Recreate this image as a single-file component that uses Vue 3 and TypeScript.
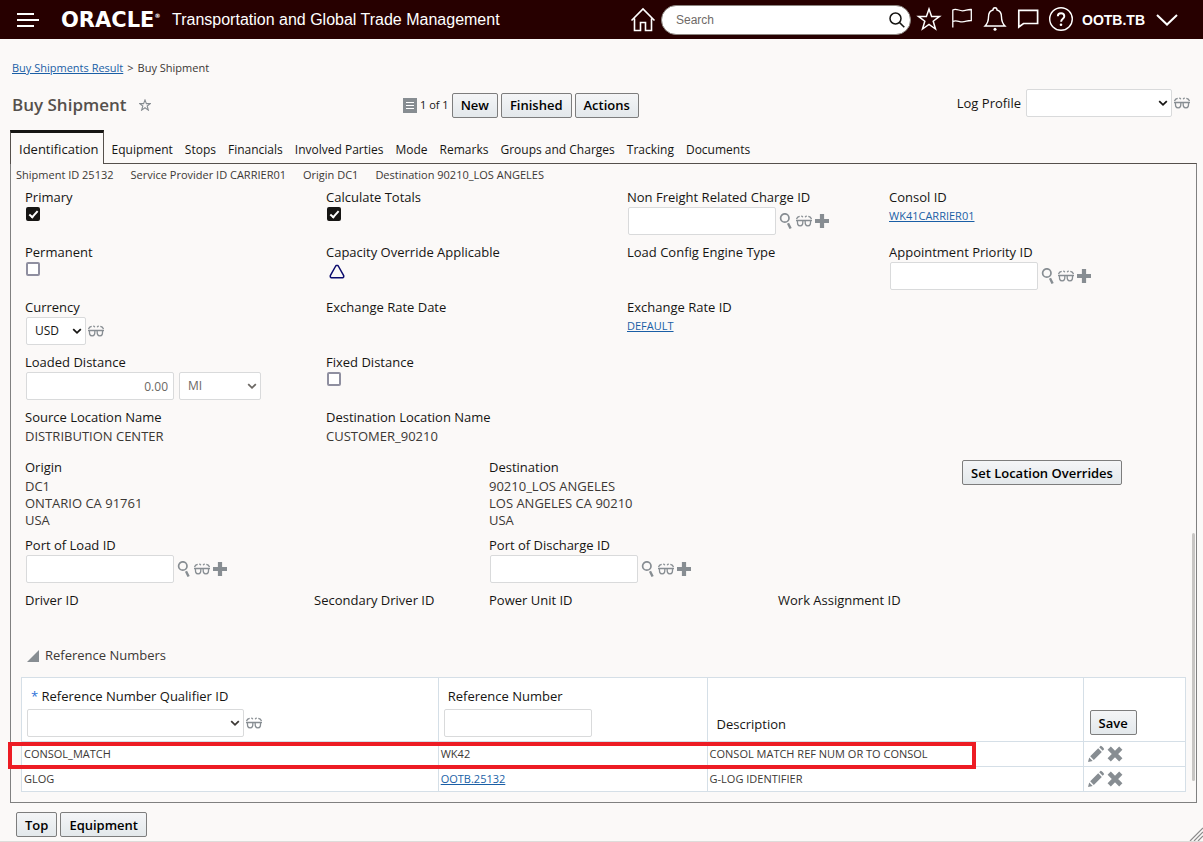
<script setup lang="ts">
import { ref } from 'vue'

const search = ref('')
const primary = ref(true)
const calculateTotals = ref(true)
const permanent = ref(false)
const fixedDistance = ref(false)
const currency = ref('USD')
const distance = ref('0.00')
const distanceUnit = ref('MI')

const headerActions = [
  { icon: 'star', label: 'Favorites' },
  { icon: 'flag', label: 'Watchlist' },
  { icon: 'bell', label: 'Notifications' },
  { icon: 'chat', label: 'Conversations' },
  { icon: 'help', label: 'Help' },
]

const tabs = [
  'Equipment', 'Stops', 'Financials', 'Involved Parties', 'Mode',
  'Remarks', 'Groups and Charges', 'Tracking', 'Documents',
]

const summary = [
  'Shipment ID 25132',
  'Service Provider ID CARRIER01',
  'Origin DC1',
  'Destination 90210_LOS ANGELES',
]

const lookups = [
  { icon: 'find', label: 'Find' },
  { icon: 'glasses', label: 'View' },
  { icon: 'plus', label: 'New' },
]

interface Reference {
  qualifier: string
  number: string
  description: string
  linked: boolean
  marked: boolean
}

const references: Reference[] = [
  { qualifier: 'CONSOL_MATCH', number: 'WK42', description: 'CONSOL MATCH REF NUM OR TO CONSOL', linked: false, marked: true },
  { qualifier: 'GLOG', number: 'OOTB.25132', description: 'G-LOG IDENTIFIER', linked: true, marked: false },
]
</script>

<template>
  <svg class="sprite" aria-hidden="true">
    <symbol id="home" viewBox="0 0 26 26"><path d="M1.500 13.500 13 2l11.500 11.500M4.500 11.500V23.500h6V15.500h5v8h6V11.500" fill="none" stroke="currentColor" stroke-width="1.600" /></symbol>
    <symbol id="star" viewBox="0 0 26 26"><path d="M13 3l2.600 7.400h7.900l-6.300 4.800 2.300 7.800L13 18.400 6.500 23l2.300-7.800-6.300-4.800h7.900z" fill="none" stroke="currentColor" stroke-width="1.500" /></symbol>
    <symbol id="flag" viewBox="0 0 26 26"><path d="M3.800 22V4.500c3.500-2 6 .8 9.500.8s5-1.500 9-1.300v11c-4-.2-5.500 1.400-9 1.400s-6-2.200-9.500-.4" transform="translate(0 -.5)" fill="none" stroke="currentColor" stroke-width="1.300" /></symbol>
    <symbol id="bell" viewBox="0 0 26 26"><path d="M3 20c2.500-2.500 3.500-5 3.500-9 0-4 1.500-6.300 4.500-7 0-3 4-3 4 0 3 .7 4.500 3 4.500 7 0 4 1 6.500 3.500 9z" fill="none" stroke="currentColor" stroke-width="1.400" /><circle cx="13" cy="23.200" r="1.500" fill="currentColor" /></symbol>
    <symbol id="chat" viewBox="0 0 26 26"><path d="M3.800 21V4.300h18.800v13.200H8.500z" fill="none" stroke="currentColor" stroke-width="1.700" /></symbol>
    <symbol id="help" viewBox="0 0 26 26"><circle cx="13" cy="13" r="11.300" fill="none" stroke="currentColor" stroke-width="1.400" /><path d="M9.800 10.200c0-4 6.500-4 6.500 0 0 2.600-3.200 2.400-3.200 5.500" fill="none" stroke="currentColor" stroke-width="1.900" /><circle cx="13" cy="18.800" r="1.300" fill="currentColor" /></symbol>
    <symbol id="search" viewBox="0 0 18 18"><circle cx="7.500" cy="7.500" r="5.500" fill="none" stroke="currentColor" stroke-width="1.500" /><path d="M11.500 11.500l4.800 4.800" stroke="currentColor" stroke-width="1.600" /></symbol>
    <symbol id="find" viewBox="0 0 16 16"><circle cx="6.800" cy="5" r="4.200" fill="none" stroke="currentColor" stroke-width="1.700" /><path d="M10 10.300l2.600 5.200" stroke="currentColor" stroke-width="2.400" /></symbol>
    <symbol id="glasses" viewBox="0 0 16 16"><path d="M0 7.500h16M1.500 7.500c-.2 4 .3 5.300 2.600 5.300s2.900-1.300 2.700-5.300M9.200 7.500c-.2 4 .4 5.300 2.700 5.300s2.800-1.300 2.600-5.300M.5 6C1 4.600 2.300 3.600 3.700 3.400M5.200 3.200c.8 0 1.300.5 1.600 1.100M9.200 4.300c.3-.6.8-1.100 1.600-1.100M12.300 3.400c1.400.2 2.700 1.200 3.200 2.600" fill="none" stroke="currentColor" stroke-width="1.300" /></symbol>
    <symbol id="plus" viewBox="0 0 16 16"><path d="M8 1v14M1 8h14" stroke="currentColor" stroke-width="4.200" /></symbol>
    <symbol id="chevron" viewBox="0 0 10 10"><path d="M1.200 3.200L5 6.800l3.800-3.600" fill="none" stroke="currentColor" stroke-width="1.800" /></symbol>
    <symbol id="pencil" viewBox="0 0 18 18"><path d="M1 17l1.200-4.600 3.500 3.500zM3.200 11.300l8-8 3.600 3.600-8 8zM12.200 2.300L13.700.8c.5-.5 3.900 2.900 3.400 3.400l-1.400 1.500z" fill="currentColor" /></symbol>
    <symbol id="cross" viewBox="0 0 18 18"><path d="M3.200 3.200l11.600 11.600M14.800 3.200L3.200 14.800" stroke="currentColor" stroke-width="4.600" /></symbol>
  </svg>

  <div class="app">
    <header class="topbar">
      <button class="menu" aria-label="Navigator">
        <svg width="22" height="14" viewBox="0 0 22 14"><path d="M0 1h17M0 7h22M0 13h17" stroke="currentColor" stroke-width="2" /></svg>
      </button>
      <span class="brand">ORACLE<sup>®</sup></span>
      <span class="product">Transportation and Global Trade Management</span>
      <button class="home" aria-label="Home"><svg width="26" height="26"><use href="#home" /></svg></button>
      <label class="search">
        <input v-model="search" type="search" placeholder="Search" aria-label="Search" />
        <svg width="18" height="18"><use href="#search" /></svg>
      </label>
      <button v-for="a in headerActions" :key="a.icon" class="action" :aria-label="a.label">
        <svg width="26" height="26"><use :href="'#' + a.icon" /></svg>
      </button>
      <button class="user">
        OOTB.TB
        <svg width="22" height="12" viewBox="0 0 22 12"><path d="M1 1l10 9.500L21 1" fill="none" stroke="currentColor" stroke-width="2" /></svg>
      </button>
    </header>

    <nav class="crumbs"><a href="#">Buy Shipments Result</a><span>&gt;</span><span>Buy Shipment</span></nav>

    <div class="titlebar">
      <div class="heading">
        <h1>Buy Shipment</h1>
        <button class="icon" aria-label="Add to favorites">
          <svg width="12" height="12" viewBox="0 0 26 26"><path d="M13 2l3 8h8.500l-6.800 5.200L20.200 24 13 18.800 5.800 24l2.500-8.800L1.500 10H10z" fill="none" stroke="currentColor" stroke-width="2.400" /></svg>
        </button>
      </div>
      <div class="commands">
        <svg width="14" height="15" viewBox="0 0 14 15"><path d="M0 0h14v15H0z" fill="#878d92" /><path d="M3 4.500h8M3 7.500h8M3 10.500h8" stroke="#fff" /></svg>
        <span class="count">1 of 1</span>
        <button class="btn">New</button>
        <button class="btn">Finished</button>
        <button class="btn">Actions</button>
      </div>
      <div class="profile">
        <label for="log-profile">Log Profile</label>
        <span class="select profile-select"><select id="log-profile"><option></option></select><svg width="10" height="10"><use href="#chevron" /></svg></span>
        <button class="icon" aria-label="View log profile"><svg width="16" height="16"><use href="#glasses" /></svg></button>
      </div>
    </div>

    <nav class="tabs">
      <a href="#" class="active">Identification</a>
      <a v-for="t in tabs" :key="t" href="#">{{ t }}</a>
    </nav>

    <main class="panel">
      <div class="summary"><span v-for="s in summary" :key="s">{{ s }}</span></div>

      <div class="grid">
        <div class="field">
          <label for="primary">Primary</label>
          <input id="primary" v-model="primary" type="checkbox" />
        </div>
        <div class="field">
          <label for="totals">Calculate Totals</label>
          <input id="totals" v-model="calculateTotals" type="checkbox" />
        </div>
        <div class="field">
          <label for="charge">Non Freight Related Charge ID</label>
          <div class="control">
            <input id="charge" class="text" type="text" />
            <button v-for="l in lookups" :key="l.icon" class="icon" :aria-label="l.label"><svg width="16" height="16"><use :href="'#' + l.icon" /></svg></button>
          </div>
        </div>
        <div class="field">
          <span class="label">Consol ID</span>
          <a href="#" class="link">WK41CARRIER01</a>
        </div>

        <div class="field">
          <label for="permanent">Permanent</label>
          <input id="permanent" v-model="permanent" type="checkbox" />
        </div>
        <div class="field">
          <span class="label">Capacity Override Applicable</span>
          <svg class="triangle" width="16" height="15" viewBox="0 0 16 15"><path d="M7 1.500h2l5.700 10.200v1.300l-1 .8H2.300l-1-.8v-1.300z" fill="none" stroke="#0a0a6c" stroke-width="1.500" stroke-linejoin="round" /></svg>
        </div>
        <div class="field"><span class="label">Load Config Engine Type</span></div>
        <div class="field">
          <label for="priority">Appointment Priority ID</label>
          <div class="control">
            <input id="priority" class="text" type="text" />
            <button v-for="l in lookups" :key="l.icon" class="icon" :aria-label="l.label"><svg width="16" height="16"><use :href="'#' + l.icon" /></svg></button>
          </div>
        </div>

        <div class="field">
          <label for="currency">Currency</label>
          <div class="control">
            <span class="select currency"><select id="currency" v-model="currency"><option>USD</option></select><svg width="10" height="10"><use href="#chevron" /></svg></span>
            <button class="icon" aria-label="View currency"><svg width="16" height="16"><use href="#glasses" /></svg></button>
          </div>
        </div>
        <div class="field"><span class="label">Exchange Rate Date</span></div>
        <div class="field wide">
          <span class="label">Exchange Rate ID</span>
          <a href="#" class="link">DEFAULT</a>
        </div>

        <div class="field">
          <label for="distance">Loaded Distance</label>
          <div class="control spaced">
            <input id="distance" v-model="distance" class="text amount" type="text" />
            <span class="select unit"><select v-model="distanceUnit" aria-label="Distance unit"><option>MI</option></select><svg width="10" height="10"><use href="#chevron" /></svg></span>
          </div>
        </div>
        <div class="field wide-rest">
          <label for="fixed">Fixed Distance</label>
          <input id="fixed" v-model="fixedDistance" type="checkbox" />
        </div>
      </div>

      <div class="grid names">
        <div class="field"><span class="label">Source Location Name</span><span class="value">DISTRIBUTION CENTER</span></div>
        <div class="field"><span class="label">Destination Location Name</span><span class="value">CUSTOMER_90210</span></div>
      </div>

      <div class="places">
        <div class="field">
          <span class="label">Origin</span>
          <span class="value">DC1<br />ONTARIO CA 91761<br />USA</span>
        </div>
        <div class="field">
          <span class="label">Destination</span>
          <span class="value">90210_LOS ANGELES<br />LOS ANGELES CA 90210<br />USA</span>
        </div>
        <div class="override"><button class="btn">Set Location Overrides</button></div>
      </div>

      <div class="places ports">
        <div class="field">
          <label for="load">Port of Load ID</label>
          <div class="control">
            <input id="load" class="text" type="text" />
            <button v-for="l in lookups" :key="l.icon" class="icon" :aria-label="l.label"><svg width="16" height="16"><use :href="'#' + l.icon" /></svg></button>
          </div>
        </div>
        <div class="field">
          <label for="discharge">Port of Discharge ID</label>
          <div class="control">
            <input id="discharge" class="text" type="text" />
            <button v-for="l in lookups" :key="l.icon" class="icon" :aria-label="l.label"><svg width="16" height="16"><use :href="'#' + l.icon" /></svg></button>
          </div>
        </div>
      </div>

      <div class="drivers">
        <span class="label">Driver ID</span>
        <span class="label">Secondary Driver ID</span>
        <span class="label">Power Unit ID</span>
        <span class="label">Work Assignment ID</span>
      </div>

      <h2>
        <button class="icon" aria-label="Collapse reference numbers"><svg width="12" height="12" viewBox="0 0 12 12"><path d="M12 0v12H0z" fill="currentColor" /></svg></button>
        Reference Numbers
      </h2>

      <table>
        <colgroup><col class="c1" /><col class="c2" /><col class="c3" /><col class="c4" /></colgroup>
        <thead>
          <tr>
            <th>
              <label for="qualifier"><i>*</i> Reference Number Qualifier ID</label>
              <div class="control">
                <span class="select qualifier"><select id="qualifier"><option></option></select><svg width="10" height="10"><use href="#chevron" /></svg></span>
                <button class="icon" aria-label="View qualifier"><svg width="16" height="16"><use href="#glasses" /></svg></button>
              </div>
            </th>
            <th>
              <label for="number">Reference Number</label>
              <div class="control"><input id="number" class="text" type="text" /></div>
            </th>
            <th><span class="label">Description</span></th>
            <th><button class="btn">Save</button></th>
          </tr>
        </thead>
        <tbody>
          <tr v-for="r in references" :key="r.qualifier" :class="{ marked: r.marked }">
            <td>{{ r.qualifier }}</td>
            <td><a v-if="r.linked" href="#">{{ r.number }}</a><template v-else>{{ r.number }}</template></td>
            <td>{{ r.description }}</td>
            <td>
              <div class="row-actions">
                <button class="icon" aria-label="Edit"><svg width="18" height="18"><use href="#pencil" /></svg></button>
                <button class="icon" aria-label="Delete"><svg width="18" height="18"><use href="#cross" /></svg></button>
              </div>
            </td>
          </tr>
        </tbody>
      </table>
      <div class="scroll-thumb"></div>
    </main>

    <footer>
      <button class="btn">Top</button>
      <button class="btn">Equipment</button>
      <svg class="grip" width="14" height="14" viewBox="0 0 14 14"><path d="M1 14L14 1M5 14l9-9M9 14l5-5" stroke="#8c8c8c" stroke-width="1.200" /></svg>
    </footer>
  </div>
</template>

<style>
body { background: #fbf9f8; }
</style>

<style scoped>
.sprite { position: absolute; width: 0; height: 0; }
.app { font: 12px/18px "Open Sans", "Noto Sans", sans-serif; color: #161513; position: relative; }
.app *, .app *::after { box-sizing: border-box; }
svg { display: block; flex: none; }
button, input, select { font: inherit; color: inherit; margin: 0; }
a { color: #1a5fa6; }

.topbar { height: 39px; background: #270000; color: #fff; display: flex; align-items: center; padding: 0 25px 0 17px; }
.topbar button { background: none; border: 0; padding: 0; display: flex; align-items: center; justify-content: center; flex: none; }
.brand { font: bold 21px/24px "DejaVu Sans", sans-serif; margin-left: 22px; width: 111px; white-space: nowrap; }
.brand sup { font-size: 6px; line-height: 6px; vertical-align: 9px; }
.product { font: 16px/20px "Liberation Sans", Arial, sans-serif; flex: 1; white-space: nowrap; }
.topbar .home { width: 36px; }
.search { width: 250px; height: 30px; position: relative; display: flex; align-items: center; border: 1px solid #8b8580; border-radius: 15px; background: #fff; padding: 0 4px 0 14px; margin-right: 1px; }
.search input { flex: 1; min-width: 0; border: 0; outline: 0; background: none; padding: 0; font: 12px/18px "Liberation Sans", Arial, sans-serif; color: #161513; appearance: none; }
.search input::placeholder { color: #6f6a66; }
.search svg { color: #161513; }
.topbar .action { width: 33px; height: 36px; padding-bottom: 1px; }
.topbar .user { font: bold 14px/18px "Liberation Sans", Arial, sans-serif; gap: 11px; margin-left: 5px; }

.crumbs { padding: 20px 12px 0; display: flex; gap: 4px; font-size: 11px; line-height: 18px; color: #3c3835; }
.titlebar { display: flex; align-items: flex-start; height: 55px; padding: 14px 13px 0 12px; }
.heading { display: flex; align-items: center; gap: 12px; width: 391px; height: 28px; }
h1 { margin: 0; font-size: 17px; line-height: 24px; font-weight: 600; color: #55504c; }
.commands { display: flex; align-items: center; gap: 3px; height: 28px; flex: 1; }
.count { font-size: 11px; }
.profile { display: flex; align-items: center; gap: 2px; margin-top: -2px; }
.profile label { font-size: 13px; margin-right: 3px; }

.btn { height: 25px; padding: 0 8px; border: 1px solid #7d7d7d; border-radius: 2px; background: linear-gradient(#f4f5f7, #e3e8eb); color: #000; font-size: 13px; line-height: 18px; font-weight: 600; white-space: nowrap; }
.icon { border: 0; background: none; padding: 0; color: #878d92; display: flex; }
.text, .select select { height: 28px; border: 1px solid #d9dadb; border-radius: 2px; background: #fff; outline: 0; }
.text { width: 148px; padding: 0 5px; }
.amount, .unit { color: #6b6763; }
.amount { text-align: right; }
.select { position: relative; display: block; }
.select select { appearance: none; width: 100%; padding: 0 8px; display: block; }
.select svg { position: absolute; right: 4px; top: 9px; pointer-events: none; }
.profile-select { width: 146px; }
.currency { width: 60px; }
.unit { width: 82px; }
.qualifier { width: 217px; }

.tabs { display: flex; align-items: flex-end; height: 33px; margin-left: 10px; margin-bottom: -1px; margin-top: -1px; position: relative; z-index: 1; }
.tabs a { color: #161513; text-decoration: none; font-size: 12px; line-height: 18px; padding: 0 4px 5px 8px; white-space: nowrap; }
.tabs .active { font-size: 13px; padding: 7px 4px 6px 8px; border: 1px solid #55504c; border-top: 3px solid #161513; border-bottom: 0; background: #fbf9f8; }

.panel { position: relative; border: 1px solid #808080; border-top-color: #55504c; margin: 0 6px 0 10px; padding: 0 10px 10px; }
.summary { display: flex; gap: 17px; font-size: 11px; line-height: 18px; color: #3c3835; height: 24px; padding-top: 2px; margin-left: -5px; }
.grid { display: grid; grid-template-columns: 301fr 301fr 262fr 297fr; grid-auto-rows: 55px; padding-left: 4px; }
.names { grid-auto-rows: 50px; }
.wide { grid-column: span 2; }
.wide-rest { grid-column: span 3; }
.field { display: flex; flex-direction: column; align-items: flex-start; }
.field label, .label, th label { font-size: 13px; line-height: 18px; font-weight: 500; color: #161513; }
.control { display: flex; align-items: center; gap: 2px; padding-left: 1px; }
.field .control { margin-top: 1px; }
.field .control.spaced { gap: 5px; }
.link { font-size: 11px; line-height: 18px; margin-top: 1px; }
.value { font-size: 13px; line-height: 17px; padding-top: 2px; color: #3c3835; }
.triangle { margin: 3px 0 0 3px; }
input[type="checkbox"] { appearance: none; width: 14px; height: 14px; margin: 1px 0 0 1px; border: 2px solid #8f8fa0; border-radius: 2px; background: #fff; }
input[type="checkbox"]:checked { background: #161513; border-color: #161513; display: grid; place-items: center; }
input[type="checkbox"]:checked::after { content: ""; width: 5px; height: 9px; margin-bottom: 3px; border: solid #fff; border-width: 0 2px 2px 0; transform: rotate(42deg); }
.places { display: grid; grid-template-columns: 464fr 473fr 224fr; padding-left: 4px; height: 78px; }
.ports { height: 55px; }
.override { padding-top: 2px; }
.drivers { display: grid; grid-template-columns: 289fr 175fr 289fr 408fr; padding-left: 4px; height: 46px; }
h2 { display: flex; align-items: center; gap: 6px; height: 40px; margin: 0; padding: 0 0 4px 6px; font-size: 13px; line-height: 18px; font-weight: 500; color: #3c3835; }
h2 .icon { padding-top: 2px; }

table { width: 100%; border-collapse: collapse; table-layout: fixed; background: #fff; font-size: 11px; line-height: 16px; color: #3c3835; }
.c1 { width: 35.800%; }
.c2 { width: 23.100%; }
.c3 { width: 32.300%; }
.c4 { width: 8.800%; }
th, td { border: 1px solid #d5dfe7; text-align: left; padding: 0 2px; }
th { height: 64px; vertical-align: bottom; padding: 0 5px 4px; font-weight: 500; }
th label { display: block; padding: 0 4px 4px; }
th .label { display: block; padding: 0 4px 4px; }
th .btn { margin: 0 1px 2px; display: block; }
th i { color: #2a72d8; font-style: normal; }
th .control { padding-left: 0; }
td { height: 25px; }
.row-actions { display: flex; gap: 1px; padding-left: 1px; }
.marked { position: relative; }
.marked::after { content: ""; position: absolute; left: -14px; top: 0; width: 83.200%; height: 27px; border: 4px solid #ed1c24; pointer-events: none; }
.scroll-thumb { position: absolute; right: 1px; top: 369px; width: 3px; height: 248px; border-radius: 2px; background: #c8c6c4; }

footer { position: relative; display: flex; gap: 3px; padding: 9px 16px 4px; border-bottom: 1px solid #dedcda; }
.grip { position: absolute; right: 0; bottom: 0; }
</style>
